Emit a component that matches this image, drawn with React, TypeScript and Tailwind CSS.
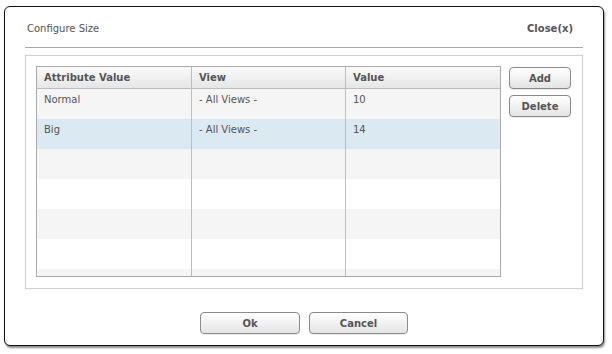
import React from "react";

const font = { fontFamily: '"DejaVu Sans", Verdana, sans-serif' };

function Btn({ label, w }: { label: string; w: string }) {
  return (
    <button
      className={`${w} h-[22px] rounded-[4px] border border-[#8a8a8a] bg-gradient-to-b from-white to-[#e4e4e4] text-[10px] font-bold text-[#555] shadow-[0_1px_0_rgba(0,0,0,0.08)]`}
      style={font}
    >
      {label}
    </button>
  );
}

export default function App() {
  const rows = [
    { a: "Normal", v: "- All Views -", n: "10", bg: "bg-[#f5f5f5]" },
    { a: "Big", v: "- All Views -", n: "14", bg: "bg-[#dbe9f3]" },
    { a: "", v: "", n: "", bg: "bg-[#f5f5f5]" },
    { a: "", v: "", n: "", bg: "bg-white" },
    { a: "", v: "", n: "", bg: "bg-[#f5f5f5]" },
    { a: "", v: "", n: "", bg: "bg-white" },
    { a: "", v: "", n: "", bg: "bg-[#f5f5f5]" },
  ];
  return (
    <div className="w-[612px] h-[354px] bg-white overflow-hidden pt-[6px] pl-[4px]" style={font}>
      <div className="w-[600px] h-[340px] bg-white border border-[#111] rounded-[6px] shadow-[1px_2px_2px_rgba(0,0,0,0.45)] px-[20px] flex flex-col">
        <div className="h-[41px] flex items-center justify-between border-b border-[#aaa] pl-[2px] pr-[10px] pt-[3px]">
          <span className="text-[10px] text-[#555]">Configure Size</span>
          <span className="text-[10px] font-bold text-[#555]">Close(x)</span>
        </div>
        <div className="mt-[7px] h-[234px] border border-[#cfcfcf] flex pt-[10px] pl-[10px]">
          <div className="w-[465px] h-[211px] border border-[#a9a9a9] flex flex-col overflow-hidden">
            <div className="h-[22px] shrink-0 flex bg-gradient-to-b from-[#fafafa] to-[#e6e6e6] border-b border-[#bdbdbd] text-[10px] font-bold text-[#555]">
              <div className="w-[155px] border-r border-[#bdbdbd] pl-[7px] flex items-center">Attribute Value</div>
              <div className="w-[154px] border-r border-[#bdbdbd] pl-[7px] flex items-center">View</div>
              <div className="flex-1 pl-[7px] flex items-center">Value</div>
            </div>
            <div className="flex-1 overflow-hidden">
              {rows.map((r, i) => (
                <div key={i} className={`h-[30px] flex text-[10px] text-[#555] ${r.bg}`}>
                  <div className="w-[155px] border-r border-[#bdbdbd] pl-[7px] pt-[3px]">{r.a}</div>
                  <div className="w-[154px] border-r border-[#bdbdbd] pl-[7px] pt-[3px]">{r.v}</div>
                  <div className="flex-1 pl-[7px] pt-[3px]">{r.n}</div>
                </div>
              ))}
            </div>
          </div>
          <div className="ml-[8px] flex flex-col gap-[6px] pt-[1px]">
            <Btn label="Add" w="w-[62px]" />
            <Btn label="Delete" w="w-[62px]" />
          </div>
        </div>
        <div className="flex justify-center gap-[9px] mt-[23px]">
          <Btn label="Ok" w="w-[100px]" />
          <Btn label="Cancel" w="w-[99px]" />
        </div>
      </div>
    </div>
  );
}
